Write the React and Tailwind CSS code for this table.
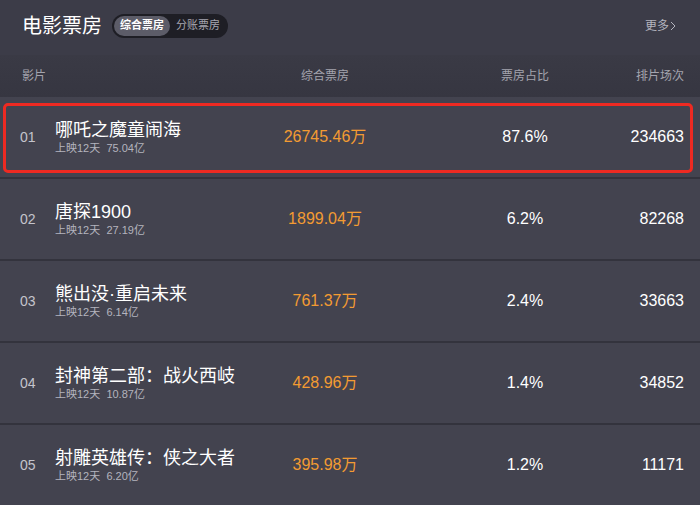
const MOVIES = [
  { no: "01", name: "哪吒之魔童闹海", days: "上映12天", total: "75.04亿", box: "26745.46万", pct: "87.6%", shows: "234663", marked: true },
  { no: "02", name: "唐探1900", days: "上映12天", total: "27.19亿", box: "1899.04万", pct: "6.2%", shows: "82268" },
  { no: "03", name: "熊出没·重启未来", days: "上映12天", total: "6.14亿", box: "761.37万", pct: "2.4%", shows: "33663" },
  { no: "04", name: "封神第二部：战火西岐", days: "上映12天", total: "10.87亿", box: "428.96万", pct: "1.4%", shows: "34852" },
  { no: "05", name: "射雕英雄传：侠之大者", days: "上映12天", total: "6.20亿", box: "395.98万", pct: "1.2%", shows: "11171" },
];

const FONT = { fontFamily: '"Liberation Sans", "Noto Sans CJK SC", sans-serif' };

const COLS = "grid grid-cols-[35px_200px_140px_60px_140px_1fr] items-center pl-[20px] pr-[16px]";

export default function App() {
  return (
    <div className="w-[700px] h-[505px] overflow-hidden bg-[#33333d] text-white" style={FONT}>
      {/* Header */}
      <div className="h-[55px] bg-[#3c3c48] flex items-center pl-[22px] pr-[23px] pb-[4px]">
        <h1 className="text-[20px] leading-none text-white">电影票房</h1>
        <div className="ml-[10px] flex items-center h-[24px] rounded-full bg-[#1e1e25] p-[2px]">
          <span className="h-[20px] px-[6px] flex items-center rounded-full bg-[#5c5c68] text-[11px] font-bold text-white">综合票房</span>
          <span className="h-[20px] px-[6px] flex items-center text-[11px] text-[#a6a6b0]">分账票房</span>
        </div>
        <div className="ml-auto flex items-center text-[12px] text-[#b4b4be]">
          更多
          <svg className="w-[8px] h-[10px]" viewBox="0 0 8 10" fill="none" stroke="currentColor" strokeWidth="1">
            <path d="M2 1l4 4-4 4" />
          </svg>
        </div>
      </div>

      {/* Column headers */}
      <div className={`${COLS} h-[42px] bg-gradient-to-b from-[#3a3a45] to-[#363641] text-[12px] text-[#a4a4ae]`}>
        <span className="col-span-2 pl-[2px]">影片</span>
        <span className="text-center">综合票房</span>
        <span />
        <span className="text-center">票房占比</span>
        <span className="text-right">排片场次</span>
      </div>

      {/* Rows */}
      <div className="flex flex-col gap-[2px]">
        {MOVIES.map((m) => (
          <div key={m.no} className={`${COLS} relative h-[80px] bg-[#43434f]`}>
            <span className="text-[14px] text-[#c4c4cc]">{m.no}</span>
            <div className="flex flex-col">
              <span className="text-[18px] leading-[22px] text-white whitespace-nowrap">{m.name}</span>
              <span className="text-[11px] leading-[15px] text-[#b4b4be] whitespace-nowrap">
                {m.days}&nbsp;&nbsp;{m.total}
              </span>
            </div>
            <span className="text-center text-[16px] text-[#f39b32]">{m.box}</span>
            <span />
            <span className="text-center text-[16px] text-white">{m.pct}</span>
            <span className="text-right text-[16px] text-white">{m.shows}</span>
            {m.marked && (
              <div className="absolute left-[3px] right-[7px] top-[6px] bottom-[4px] border-[3px] border-[#ee2a22] rounded-[5px] pointer-events-none" />
            )}
          </div>
        ))}
      </div>
    </div>
  );
}
